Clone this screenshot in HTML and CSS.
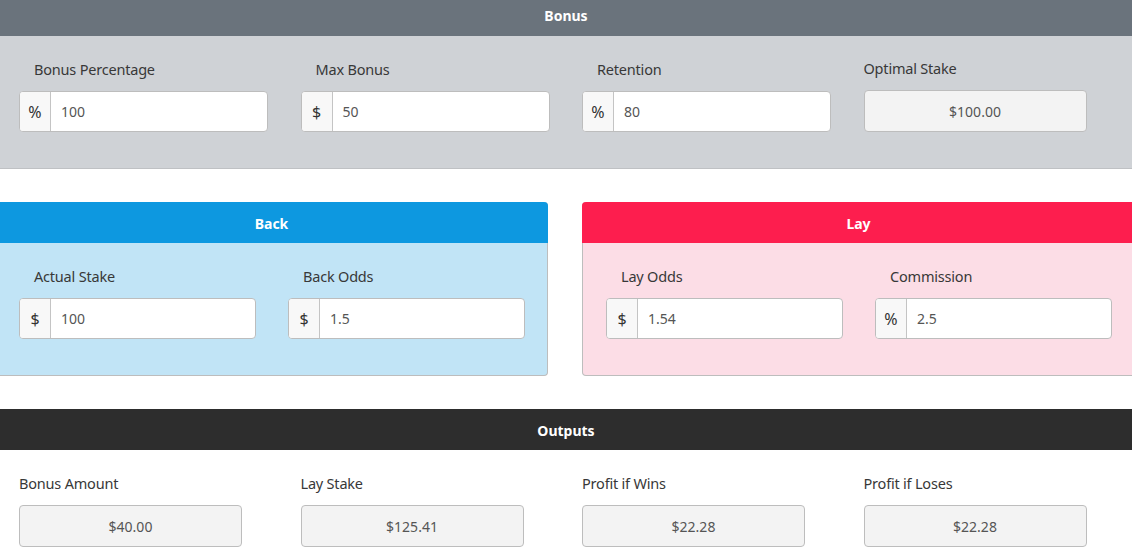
FILE: index.html
```html
<!DOCTYPE html>
<html>
<head>
<meta charset="utf-8">
<link rel="stylesheet" href="styles.css">
</head>
<body>
<section class="bonus">
  <div class="bar bar-bonus">Bonus</div>
  <div class="bonus-body">
    <div class="field">
      <label class="lbl ind">Bonus Percentage</label>
      <div class="ig"><span class="addon">%</span><span class="val">100</span></div>
    </div>
    <div class="field">
      <label class="lbl ind">Max Bonus</label>
      <div class="ig"><span class="addon">$</span><span class="val">50</span></div>
    </div>
    <div class="field">
      <label class="lbl ind">Retention</label>
      <div class="ig"><span class="addon">%</span><span class="val">80</span></div>
    </div>
    <div class="field">
      <label class="lbl">Optimal Stake</label>
      <div class="out">$100.00</div>
    </div>
  </div>
</section>

<div class="panels">
  <section class="panel back">
    <div class="bar bar-back">Back</div>
    <div class="panel-body">
      <div class="field">
        <label class="lbl ind">Actual Stake</label>
        <div class="ig"><span class="addon">$</span><span class="val">100</span></div>
      </div>
      <div class="field">
        <label class="lbl ind">Back Odds</label>
        <div class="ig"><span class="addon">$</span><span class="val">1.5</span></div>
      </div>
    </div>
  </section>
  <section class="panel lay">
    <div class="bar bar-lay">Lay</div>
    <div class="panel-body">
      <div class="field">
        <label class="lbl ind">Lay Odds</label>
        <div class="ig"><span class="addon">$</span><span class="val">1.54</span></div>
      </div>
      <div class="field">
        <label class="lbl ind">Commission</label>
        <div class="ig"><span class="addon">%</span><span class="val">2.5</span></div>
      </div>
    </div>
  </section>
</div>

<section class="outputs">
  <div class="bar bar-out">Outputs</div>
  <div class="out-body">
    <div class="field">
      <label class="lbl">Bonus Amount</label>
      <div class="out">$40.00</div>
    </div>
    <div class="field">
      <label class="lbl">Lay Stake</label>
      <div class="out">$125.41</div>
    </div>
    <div class="field">
      <label class="lbl">Profit if Wins</label>
      <div class="out">$22.28</div>
    </div>
    <div class="field">
      <label class="lbl">Profit if Loses</label>
      <div class="out">$22.28</div>
    </div>
  </div>
</section>
</body>
</html>
```

FILE: styles.css
```css
* { box-sizing: border-box; }
html, body { margin: 0; padding: 0; }
body {
  width: 1132px;
  overflow: hidden;
  font-family: "Noto Sans", "Open Sans", sans-serif;
  color: #444;
  background: #fff;
}
.bar {
  color: #fff;
  font-weight: bold;
  font-size: 14px;
  text-align: center;
}
.bar-bonus { background: #6a737c; height: 36px; line-height: 32px; }
.bar-back { background: #0d98e0; height: 41px; line-height: 44px; border-radius: 4px 4px 0 0; }
.bar-lay { background: #fd1e4e; height: 41px; line-height: 44px; border-radius: 4px 4px 0 0; }
.bar-out { background: #2d2d2d; height: 41px; line-height: 44px; }

.bonus-body {
  background: #cfd2d6;
  border-bottom: 1px solid #bfc1c4;
  display: grid;
  grid-template-columns: repeat(4, 281.5px);
  padding: 22px 0 36px 19px;
  align-items: end;
}
.field { display: flex; flex-direction: column; }
.lbl {
  font-size: 14.5px;
  line-height: 20px;
  color: #383838;
  margin-bottom: 12px;
  letter-spacing: -0.2px;
}
.lbl.ind { padding-left: 15px; margin-bottom: 12px; }

.ig {
  display: flex;
  height: 41px;
  border: 1px solid #bdbdbd;
  border-radius: 4px;
  background: #fff;
  overflow: hidden;
  width: 249px;
  font-size: 14px;
}
.addon {
  width: 31px;
  flex: none;
  background: #f8f8f8;
  border-right: 1px solid #c4c4c4;
  color: #333;
  display: flex;
  align-items: center;
  justify-content: center;
  font-size: 16px;
}
.val {
  display: flex;
  align-items: center;
  padding-left: 10px;
  color: #555;
}
.out {
  width: 223px;
  height: 42px;
  border: 1px solid #bdbdbd;
  border-radius: 4px;
  background: #f3f3f3;
  color: #555;
  font-size: 14px;
  display: flex;
  align-items: center;
  justify-content: center;
}

.panels {
  display: flex;
  gap: 34px;
  margin: 33px 0 0 -5px;
  width: 1140px;
}
.panel {
  width: 553px;
  border: 1px solid #bdbdbd;
  border-top: none;
  border-radius: 4px;
}
.back { background: #c1e4f6; }
.lay { background: #fcdde6; }
.panel .bar { margin: 0 -1px; }
.panel-body {
  display: grid;
  grid-template-columns: 269px 269px;
  padding: 23px 0 36px 23px;
}
.panel .ig { width: 237px; }

.outputs { margin-top: 33px; }
.out-body {
  display: grid;
  grid-template-columns: repeat(4, 281.5px);
  padding: 23px 0 0 19px;
}
```
